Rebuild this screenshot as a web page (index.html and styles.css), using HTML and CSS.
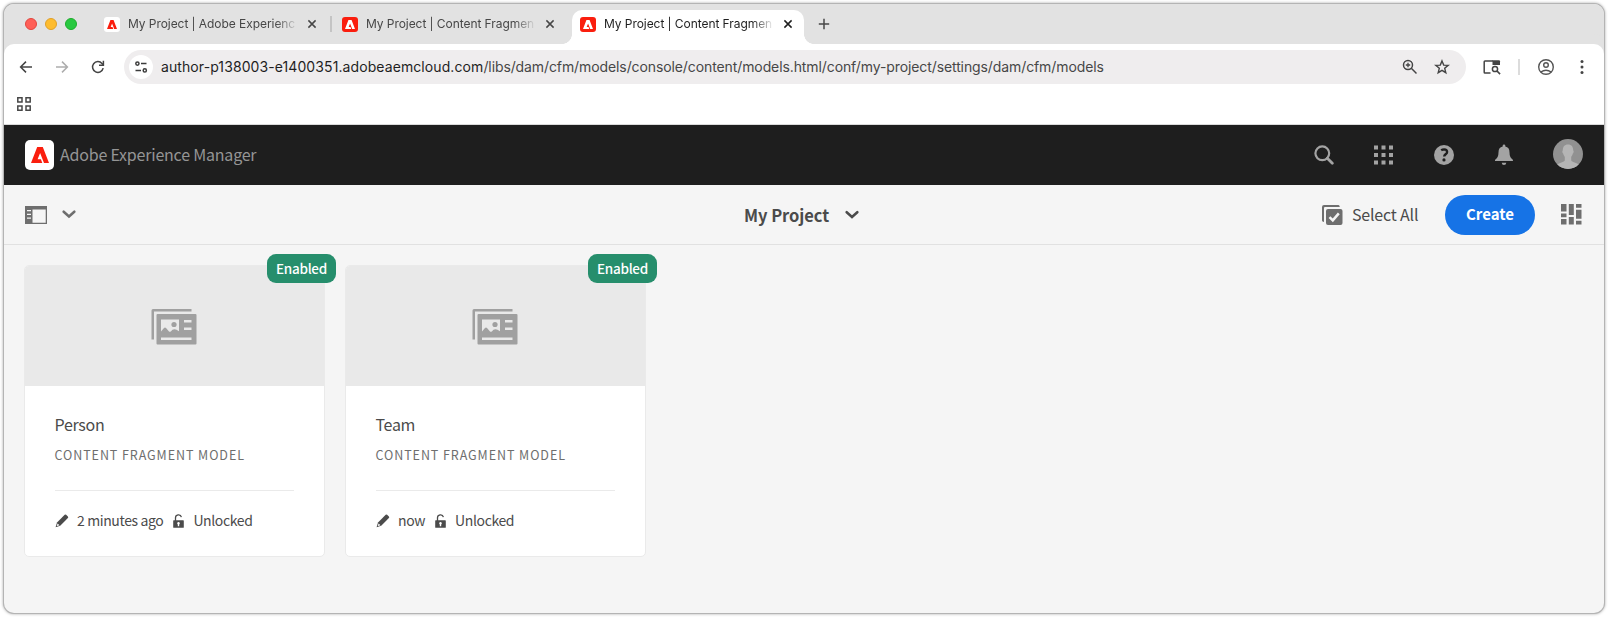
FILE: index.html
```html
<!DOCTYPE html>
<html lang="en">
<head>
<meta charset="utf-8">
<title>My Project | Content Fragment Models</title>
<link rel="stylesheet" href="styles.css">
</head>
<body>
<svg width="0" height="0" class="defs">
  <symbol id="adobe-a" viewBox="0 0 18 16"><path d="M6.200 0h5.600L18 16h-5L9.100 6 6.600 12.300h3.300L11.300 16H0z"/></symbol>
  <symbol id="close" viewBox="0 0 10 10"><path d="M1.400 1.400l7.200 7.200M8.600 1.400l-7.200 7.200" fill="none" stroke="currentColor" stroke-width="1.500"/></symbol>
  <symbol id="model" viewBox="0 0 46 36"><path fill="#a0a0a0" d="M2 0h38.500v2.500H3V30.500H.5V1.500Q.5 0 2 0z"/><path fill="#a0a0a0" fill-rule="evenodd" d="M6.500 5h38q1 0 1 1v28.500q0 1-1 1h-38q-1 0-1-1V6q0-1 1-1zM10 10.500v12l3-3.500q1-1 2 0l3 3.500q1 .8 2-.2l1.500-1.500q2-1.200 4 0l2.500 1.500V10.500zM33 11v2.500h7.500V11zM33 18.500V21h7.500v-2.500zM10 28.500v2.500h30.500v-2.500z"/><circle cx="23" cy="15.500" r="2.600" fill="#a0a0a0"/></symbol>
  <symbol id="pencil" viewBox="0 0 14 14"><path fill="#4b4b4b" d="M9.700.7q.7-.5 1.400.1l1.800 1.700q.7.800 0 1.600L5.200 11.700.6 13.300 2 8.400z"/><path fill="#fff" d="M2.600 9.400l1.900 1.900-2.400.8-.3-.3z"/></symbol>
  <symbol id="unlock" viewBox="0 0 11 14"><path d="M2.500 7V4a3 3 0 0 1 5.900-.9" fill="none" stroke="#4b4b4b" stroke-width="1.300"/><path fill="#4b4b4b" fill-rule="evenodd" d="M.8 6.200h9.400q.6 0 .6.600v6.400q0 .6-.6.600H.8q-.6 0-.6-.6V6.800q0-.6.600-.6zM5.500 8a1.300 1.300 0 0 0-.7 2.400v1.800h1.400v-1.800A1.300 1.300 0 0 0 5.500 8z"/></symbol>
</svg>
<div class="window">
  <header class="tabstrip">
    <div class="lights"><i class="light red"></i><i class="light amber"></i><i class="light green"></i></div>
    <div class="tab">
      <span class="favicon favicon-white"><svg width="10" height="9"><use href="#adobe-a"/></svg></span>
      <span class="tab-title">My Project | Adobe Experienc</span>
      <svg class="close" width="10" height="10"><use href="#close"/></svg>
    </div>
    <i class="tab-sep"></i>
    <div class="tab">
      <span class="favicon"><svg width="10" height="9"><use href="#adobe-a"/></svg></span>
      <span class="tab-title">My Project | Content Fragmen</span>
      <svg class="close" width="10" height="10"><use href="#close"/></svg>
    </div>
    <div class="tab tab-active">
      <span class="favicon"><svg width="10" height="9"><use href="#adobe-a"/></svg></span>
      <span class="tab-title">My Project | Content Fragmen</span>
      <svg class="close" width="10" height="10"><use href="#close"/></svg>
    </div>
    <svg class="plus" width="12" height="12" viewBox="0 0 12 12"><path d="M6 .8v10.400M.8 6h10.400" stroke="#474747" stroke-width="1.500"/></svg>
  </header>

  <div class="navbar">
    <svg class="nav" width="16" height="16" viewBox="0 0 16 16"><path d="M14 8H2.800M8 2.600L2.600 8 8 13.400" fill="none" stroke="#444" stroke-width="1.500"/></svg>
    <svg class="nav" width="16" height="16" viewBox="0 0 16 16"><path d="M2 8h11.200M8 2.600L13.400 8 8 13.400" fill="none" stroke="#adadad" stroke-width="1.500"/></svg>
    <svg class="nav" width="16" height="16" viewBox="0 0 16 16"><path d="M13.200 9.200A5.400 5.400 0 1 1 12 4.400l1.200 1.400" fill="none" stroke="#444" stroke-width="1.500"/><path d="M13.400 1.800v4.400H9" fill="none" stroke="#444" stroke-width="1.500"/></svg>
    <div class="omnibox">
      <span class="site-info"><svg width="14" height="12" viewBox="0 0 14 12"><g fill="none" stroke="#3c3c3c" stroke-width="1.500"><circle cx="3.400" cy="2.600" r="1.600"/><path d="M7 2.600h5.500M1.500 9.400H7"/><circle cx="10.800" cy="9.400" r="1.600"/></g></svg></span>
      <span class="url"><b>author-p138003-e1400351.adobeaemcloud.com</b>/libs/dam/cfm/models/console/content/models.html/conf/my-project/settings/dam/cfm/models</span>
      <svg width="16" height="16" viewBox="0 0 16 16"><g fill="none" stroke="#444" stroke-width="1.500"><circle cx="6" cy="6" r="4.500"/><path d="M9.300 9.300l5.200 5.200"/><path d="M6 3.800v4.400M3.800 6h4.400" stroke-width="1.300"/></g></svg>
      <svg width="16" height="16" viewBox="0 0 16 16"><path d="M8 1.900l1.700 4.200 4.500.3-3.500 2.900 1.100 4.400L8 11.300l-3.800 2.400 1.100-4.400L1.800 6.400l4.500-.3z" fill="none" stroke="#444" stroke-width="1.400"/></svg>
    </div>
    <svg class="tabsearch" width="18" height="16" viewBox="0 0 18 16"><path d="M7.500 14H2Q1.200 14 1.200 13.200V2.800Q1.200 2 2 2h8" fill="none" stroke="#444" stroke-width="1.500"/><path d="M9.500 1.200H16q1 0 1 1V6H9.500z" fill="#444"/><circle cx="12" cy="10" r="2.600" fill="none" stroke="#444" stroke-width="1.500"/><path d="M13.900 11.900l3.200 3.200" stroke="#444" stroke-width="1.500"/></svg>
    <i class="nav-sep"></i>
    <svg class="profile" width="18" height="18" viewBox="0 0 18 18"><g fill="none" stroke="#555" stroke-width="1.400"><circle cx="9" cy="9" r="7.300"/><circle cx="9" cy="7" r="2.300"/><path d="M3.800 14q5.200-3.400 10.400 0"/></g></svg>
    <svg class="dots" width="4" height="16" viewBox="0 0 4 16" fill="#444"><circle cx="2" cy="2.600" r="1.500"/><circle cx="2" cy="8" r="1.500"/><circle cx="2" cy="13.400" r="1.500"/></svg>
  </div>
  <div class="bookmarks"><svg width="14" height="14" viewBox="0 0 14 14"><path d="M.8.8h4.200v4.200H.8zM9 .8h4.200v4.200H9zM.8 9h4.200v4.200H.8zM9 9h4.200v4.200H9z" fill="none" stroke="#474747" stroke-width="1.500"/></svg></div>

  <div class="shell">
    <span class="brand-logo"><svg width="18" height="16"><use href="#adobe-a"/></svg></span>
    <span class="brand">Adobe Experience Manager</span>
    <div class="shell-icons">
      <svg width="20" height="20" viewBox="0 0 20 20"><circle cx="8.300" cy="8.300" r="6.900" fill="none" stroke="#a3a3a3" stroke-width="2.200"/><path d="M13.300 13.300l5 5" stroke="#a3a3a3" stroke-width="2.800" stroke-linecap="round"/></svg>
      <svg width="20" height="20" viewBox="0 0 20 20" fill="#a3a3a3"><path d="M0 .5h4v4H0zm7.500 0h4v4h-4zm7.500 0h4v4h-4zM0 8h4v4H0zm7.500 0h4v4h-4zM15 8h4v4h-4zM0 15.500h4v4H0zm7.500 0h4v4h-4zm7.500 0h4v4h-4z"/></svg>
      <svg width="20" height="20" viewBox="0 0 20 20"><circle cx="10" cy="10" r="10" fill="#a3a3a3"/><path d="M7.200 5.300q1.300-.9 2.900-.9 3 .1 3 2.500 0 1.200-1.500 2.400-1.400 1.100-1.400 2.300" fill="none" stroke="#1e1e1e" stroke-width="2.400"/><circle cx="10" cy="14.900" r="1.600" fill="#1e1e1e"/></svg>
      <svg width="20" height="22" viewBox="0 0 20 22" fill="#a3a3a3"><path d="M8.700 2.600V1.500Q8.700.5 10 .5t1.300 1v1.100q4.200.8 4.200 5.600 0 5.200 3.100 7.300.4.400.4 1.500H1q0-1.100.4-1.500 3.100-2.100 3.100-7.300 0-4.800 4.200-5.600zM7.700 18.700h4.600q-.2 2.300-2.300 2.300t-2.300-2.300z"/></svg>
    </div>
    <svg class="avatar" width="30" height="30" viewBox="0 0 30 30"><defs><clipPath id="round"><circle cx="15" cy="15" r="15"/></clipPath></defs><g clip-path="url(#round)"><path fill="#919191" d="M0 0h30v30H0z"/><path fill="#b5b5b5" d="M15 5.500c3.700 0 5.300 2.500 5.200 6 .8.200.5 2.600-.4 3-.3 1.800-1.200 2.600-1.600 3.500v3.500c1.500 2 6.300 2 8.300 5V31h-23v-4.500c2-3 6.800-3 8.300-5V18c-.4-.9-1.300-1.700-1.600-3.500-.9-.4-1.200-2.800-.4-3-.1-3.500 1.500-6 5.200-6z"/></g></svg>
  </div>

  <div class="actionbar">
    <div class="side-left">
      <svg width="22" height="18" viewBox="0 0 22 18"><path fill="#6e6e6e" fill-rule="evenodd" d="M0 0h22v18H0zM7.500 3.500v13.200h13.200V3.500zM2 4v1.300h4V4zM2 7.700V9h4V7.700zM2 11.400v1.300h4v-1.300z"/></svg>
      <svg class="rail-chevron" width="14" height="9" viewBox="0 0 14 9"><path d="M1.700 1.700L7 6.500l5.300-4.800" fill="none" stroke="#6e6e6e" stroke-width="2.500" stroke-linecap="round"/></svg>
    </div>
    <div class="crumb"><span>My Project</span><svg width="14" height="9" viewBox="0 0 14 9"><path d="M1.700 2.200L7 7l5.300-4.800" fill="none" stroke="#4b4b4b" stroke-width="2.500" stroke-linecap="round"/></svg></div>
    <div class="side-right">
      <svg width="21" height="20" viewBox="0 0 21 20"><path fill="#6e6e6e" d="M2 0h14.500q1 0 1.300 2H3q-1 0-1 1v14Q0 16.700 0 15.500V2Q0 0 2 0z"/><rect x="4" y="4" width="16.500" height="16" rx="2" fill="#6e6e6e"/><path d="M7.500 12.200l3.300 3.200 6-7" fill="none" stroke="#f5f5f5" stroke-width="2.500"/></svg>
      <span class="select-all">Select All</span>
      <button class="create">Create</button>
      <svg width="21" height="21" viewBox="0 0 21 21" fill="#6e6e6e"><path d="M0 0h5.500v7.500H0zM0 9.500h5.500v3.800H0zM0 15h5.500v5.500H0zM7.800 0h5v11h-5zM7.800 13h5v7.500h-5zM15 0h5.500v3.700H15zM15 5.700h5.500v9H15zM15 16.800h5.500v3.700H15z"/></svg>
    </div>
  </div>

  <main class="cards">
    <article class="card">
      <span class="badge">Enabled</span>
      <div class="thumb"><svg width="46" height="36"><use href="#model"/></svg></div>
      <div class="info">
        <div class="name">Person</div>
        <div class="kind">CONTENT FRAGMENT MODEL</div>
        <div class="meta"><svg width="14" height="14"><use href="#pencil"/></svg><span class="ago">2 minutes ago</span><svg width="11" height="14"><use href="#unlock"/></svg><span class="lock">Unlocked</span></div>
      </div>
    </article>
    <article class="card">
      <span class="badge">Enabled</span>
      <div class="thumb"><svg width="46" height="36"><use href="#model"/></svg></div>
      <div class="info">
        <div class="name">Team</div>
        <div class="kind">CONTENT FRAGMENT MODEL</div>
        <div class="meta"><svg width="14" height="14"><use href="#pencil"/></svg><span class="ago">now</span><svg width="11" height="14"><use href="#unlock"/></svg><span class="lock">Unlocked</span></div>
      </div>
    </article>
  </main>
</div>
</body>
</html>
```
FILE: styles.css
```css
* { box-sizing: border-box; }
body { margin: 0; padding: 4px; height: 617px; overflow: hidden; background: #fff; font-family: "Noto Sans CJK JP", "Noto Sans", sans-serif; color: #4b4b4b; }
svg { display: block; flex: none; }
.defs { position: absolute; }
.window { width: 1600px; height: 609px; border-radius: 10px; overflow: hidden; background: #f5f5f5; display: flex; flex-direction: column; box-shadow: 0 0 0 1px #b4b4b4, 0 0 3px 1px #aaa; }

.tabstrip { height: 40px; flex: none; background: #e2e2e2; display: flex; align-items: center; font: 12px Inter, sans-serif; color: #474747; }
.lights { width: 92px; padding-left: 21px; display: flex; gap: 8px; }
.light { width: 12px; height: 12px; border-radius: 50%; }
.red { background: #ff5f57; border: 1px solid #e2463f; }
.amber { background: #febc2e; border: 1px solid #e0a028; }
.green { background: #28c840; border: 1px solid #1dad2b; }
.tab { width: 232px; height: 34px; padding: 0 11px 0 8px; display: flex; align-items: center; flex: none; }
.tab-sep { width: 2px; height: 16px; margin: 0 2px; background: #c4c4c4; flex: none; }
.tab-active { position: relative; margin-left: 6px; align-self: flex-end; background: #fff; border-radius: 10px 10px 0 0; color: #1f1f1f; padding-bottom: 6px; }
.tab-active::before, .tab-active::after { content: ""; position: absolute; bottom: 0; width: 10px; height: 10px; }
.tab-active::before { left: -10px; background: radial-gradient(circle at 0 0, #e2e2e2 9.600px, #fff 10.200px); }
.tab-active::after { right: -10px; background: radial-gradient(circle at 100% 0, #e2e2e2 9.600px, #fff 10.200px); }
.favicon { width: 16px; height: 15px; margin-right: 8px; border-radius: 3px; background: #fa1e0e; fill: #fff; display: flex; align-items: center; justify-content: center; flex: none; }
.favicon-white { background: #fff; fill: #fa1e0e; }
.tab-title { width: 170px; margin-right: -2px; white-space: nowrap; letter-spacing: -.06px; line-height: 18px; -webkit-mask-image: linear-gradient(90deg, #000 148px, rgba(0, 0, 0, .1) 168px); mask-image: linear-gradient(90deg, #000 148px, rgba(0, 0, 0, .1) 168px); }
.close { margin-left: 11px; }
.plus { margin-left: 14px; }

.navbar { height: 46px; flex: none; background: #fff; border-radius: 10px 10px 0 0; display: flex; align-items: center; padding: 0 0 0 14px; box-shadow: 0 -10px 0 0 #e2e2e2; }
.nav { margin-right: 20px; }
.omnibox { width: 1342px; height: 34px; margin-left: -2px; border-radius: 17px; background: #efedee; display: flex; align-items: center; gap: 16px; padding: 0 16px 0 5px; flex: none; }
.site-info { width: 24px; height: 24px; border-radius: 50%; background: #fff; display: flex; align-items: center; justify-content: center; margin-right: -8px; }
.url { flex: 1; padding-bottom: 1px; font: 14px Inter, sans-serif; letter-spacing: -.1px; color: #474747; white-space: nowrap; }
.url b { font-weight: 400; letter-spacing: .09px; color: #1f1f1f; }
.tabsearch { margin-left: 17px; }
.nav-sep { width: 2px; height: 16px; margin-left: 17px; background: #dcdcdc; }
.profile { margin-left: 17px; }
.dots { margin-left: 25px; }
.bookmarks { height: 35px; flex: none; background: #fff; border-bottom: 1px solid #dadada; padding: 7px 0 0 13px; }

.shell { height: 60px; flex: none; background: #1e1e1e; display: flex; align-items: center; padding: 0 21px; }
.brand-logo { width: 29px; height: 30px; border-radius: 5px; background: #fff; fill: #fa1e0e; display: flex; align-items: center; justify-content: center; }
.brand { margin-left: 6px; padding-bottom: 2px; font-size: 16px; letter-spacing: -.21px; line-height: 24px; color: #959595; white-space: nowrap; }
.shell-icons { margin-left: auto; display: flex; align-items: center; gap: 40px; }
.avatar { margin: -2px 0 0 39px; }

.actionbar { height: 60px; flex: none; border-bottom: 1px solid #e1e1e1; display: grid; grid-template-columns: 740px 1fr auto; align-items: center; padding: 0 22px 0 0; }
.side-left { display: flex; align-items: center; padding-left: 21px; }
.rail-chevron { margin-left: 15px; }
.crumb { display: flex; align-items: center; font-size: 16.500px; letter-spacing: -.05px; font-weight: 700; line-height: 24px; }
.crumb span { width: 84px; white-space: nowrap; margin-right: 17px; }
.side-right { display: flex; align-items: center; }
.select-all { width: 67px; margin: 0 26px 0 9px; padding-bottom: 1px; font-size: 16px; letter-spacing: -.2px; line-height: 24px; white-space: nowrap; }
.create { width: 90px; height: 40px; margin-right: 26px; border: 0; border-radius: 20px; background: #1673e6; color: #fff; font: 700 15px/24px "Noto Sans CJK JP", sans-serif; padding: 0 0 2px; }

.cards { display: flex; gap: 20px; padding: 20px; }
.card { position: relative; width: 301px; height: 292px; border: 1px solid #eaeaea; border-radius: 5px; background: #fff; }
.badge { position: absolute; right: -12px; top: -12px; width: 69px; height: 29px; border-radius: 9px; background: #268e6c; color: #fff; font-size: 13.500px; letter-spacing: -.3px; font-weight: 500; line-height: 29px; text-align: center; }
.thumb { height: 120px; padding: 1px 1px 0 0; background: #e9e9e9; border-radius: 4px 4px 0 0; display: flex; align-items: center; justify-content: center; }
.info { padding: 26px 30px 0; }
.name { font-size: 16px; letter-spacing: -.3px; text-indent: -.5px; line-height: 24px; white-space: nowrap; }
.kind { margin-top: 8px; padding-bottom: 24px; border-bottom: 1px solid #eaeaea; font-size: 12.500px; line-height: 22px; letter-spacing: .93px; text-indent: -.5px; color: #6e6e6e; white-space: nowrap; }
.meta { margin-top: 17px; display: flex; align-items: center; font-size: 14px; letter-spacing: -.38px; line-height: 24px; white-space: nowrap; }
.meta span { padding-bottom: 2px; }
.ago { margin: 0 10px 0 8px; }
.lock { margin-left: 9px; }
```
